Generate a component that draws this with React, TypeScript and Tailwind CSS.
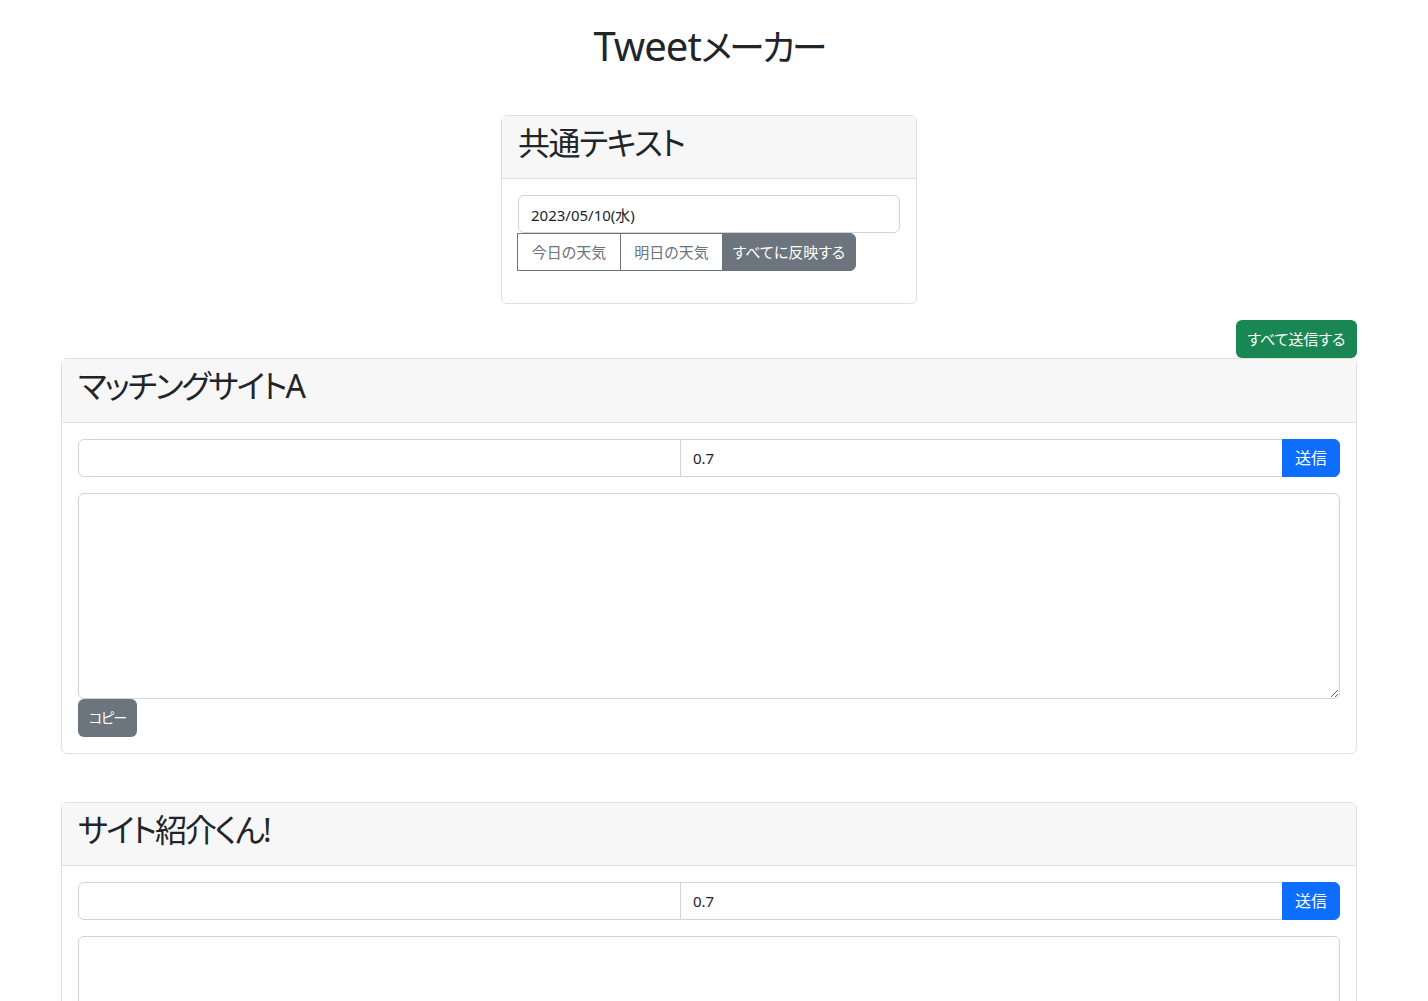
import React from "react";

type SiteCardProps = {
  title: string;
};

function SiteCard(props: Readonly<SiteCardProps>) {
  return (
    <section className="mb-12 rounded-[6px] border border-[#dfdfdf] bg-white">
      <div className="border-b border-[#dfdfdf] bg-[#f7f7f7] px-4 pt-2 pb-2">
        <h2 className="mb-2 text-[32px] leading-[38.4px] font-normal tracking-[-2px]">{props.title}</h2>
      </div>
      <div className="p-4">
        <div className="flex">
          <input
            type="text"
            className="h-[38px] min-w-0 flex-1 rounded-l-[6px] border border-[#ced4da] px-3 text-base outline-none"
          />
          <input
            type="text"
            defaultValue="0.7"
            className="-ml-px h-[38px] min-w-0 flex-1 border border-[#ced4da] px-3 text-[15px] outline-none"
          />
          <button className="-ml-px h-[38px] w-[58px] rounded-r-[6px] border border-[#0d6efd] bg-[#0d6efd] text-base text-white">
            送信
          </button>
        </div>
        <textarea
          rows={8}
          className="mt-4 block h-[206px] w-full rounded-[6px] border border-[#ced4da] px-3 py-1.5 text-base outline-none"
        />
        <button className="h-[38px] w-[59px] rounded-[6px] bg-[#6c757d] text-[14px] tracking-[-1px] text-white">
          コピー
        </button>
      </div>
    </section>
  );
}

export default function App() {
  return (
    <div className="w-[1418px] bg-white font-['Noto_Sans','Noto_Sans_CJK_JP',sans-serif] text-[#212529] [font-feature-settings:'palt']">
      <div className="mx-auto w-[1296px]">
        <h1 className="h-[48px] pt-0 mt-[22px] text-center text-[40px] leading-[48px] font-normal">
          <span className="tracking-[-1px]">Tweet</span>
          <span className="text-[36px] leading-none tracking-[-3px]">メーカー</span>
        </h1>

        <section className="mx-auto mt-[45px] w-[416px] rounded-[6px] border border-[#dfdfdf]">
          <div className="border-b border-[#dfdfdf] bg-[#f7f7f7] px-4 pt-2 pb-2">
            <h2 className="mb-2 text-[32px] leading-[38.4px] font-normal tracking-[-1.5px]">共通テキスト</h2>
          </div>
          <div className="p-4">
            <input
              type="text"
              defaultValue="2023/05/10(水)"
              className="block h-[38px] w-full rounded-[6px] border border-[#ced4da] px-3 text-[15px] outline-none"
            />
            <div className="mb-4 -ml-px flex">
              <button className="h-[38px] w-[104px] border border-[#6c757d] bg-white text-[15px] text-[#6c757d]">
                今日の天気
              </button>
              <button className="-ml-px h-[38px] w-[103px] border border-[#6c757d] bg-white text-[15px] text-[#6c757d]">
                明日の天気
              </button>
              <button className="-ml-px h-[38px] w-[134px] rounded-r-[6px] border border-[#6c757d] bg-[#6c757d] text-[15px] text-white">
                すべてに反映する
              </button>
            </div>
          </div>
        </section>

        <div className="mt-4 flex justify-end">
          <button className="h-[38px] w-[121px] rounded-[6px] bg-[#198754] text-[15px] text-white">すべて送信する</button>
        </div>

        <SiteCard title="マッチングサイトA" />
        <SiteCard title="サイト紹介くん!" />
      </div>
    </div>
  );
}
